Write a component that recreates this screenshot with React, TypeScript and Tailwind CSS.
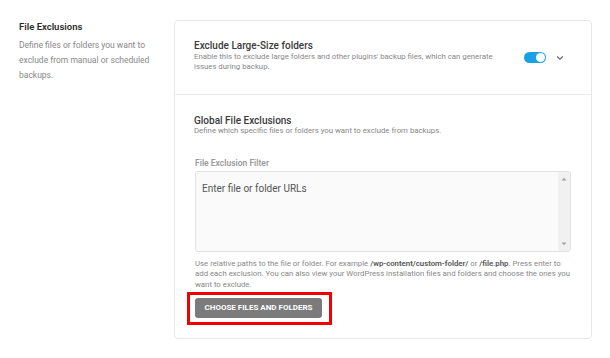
import React from 'react';

function Toggle() {
  return (
    <div className="flex h-[11px] w-[22px] items-center justify-end rounded-full bg-[#1aa1e4] pr-[1px]">
      <div className="h-[9px] w-[9px] rounded-full bg-white" />
    </div>
  );
}

function Chevron() {
  return (
    <svg width="8" height="6" viewBox="0 0 8 6" className="block">
      <path d="M1.2 1.5 L4 4.2 L6.8 1.5" fill="none" stroke="#6b6b6b" strokeWidth="1.3" />
    </svg>
  );
}

function FakeTextarea() {
  return (
    <div className="mt-[3px] flex h-[81px] w-[376px] rounded-[3px] border border-[#e2e2e2] bg-[#fafafa]">
      <div className="flex-1 pl-[6px] pt-[11px] text-[10px] leading-[12px] text-[#555]">
        Enter file or folder URLs
      </div>
      <div className="flex w-[12px] flex-col items-center justify-between bg-[#f1f1f1] py-[5px]">
        <svg width="6" height="4" viewBox="0 0 6 4">
          <path d="M0.5 3.5 L3 0.8 L5.5 3.5 Z" fill="#a3a3a3" />
        </svg>
        <svg width="6" height="4" viewBox="0 0 6 4">
          <path d="M0.5 0.5 L3 3.2 L5.5 0.5 Z" fill="#a3a3a3" />
        </svg>
      </div>
    </div>
  );
}

export default function App() {
  return (
    <div className="h-[358px] w-[610px] bg-white font-['Roboto',sans-serif]">
      <div className="flex pl-[19px] pt-[20px]">
        <div className="w-[155px]">
          <p className="text-[9.5px] font-semibold leading-[14px] text-[#2b2b2b]">File Exclusions</p>
          <p className="mt-[3.5px] w-[136px] text-[8.5px] leading-[15px] text-[#888]">
            Define files or folders you want to exclude from manual or scheduled backups.
          </p>
        </div>

        <div className="w-[418px] rounded-[4px] border border-[#e8e8e8]">
          <div className="flex h-[73px] items-start pl-[19px] pr-[27px] pt-[18.5px]">
            <div className="w-[310px]">
              <p className="text-[10px] leading-[12px] font-medium text-[#3a3a3a]">Exclude Large-Size folders</p>
              <p className="text-[7.8px] leading-[10px] text-[#888]">
                Enable this to exclude large folders and other plugins' backup files, which can generate issues during backup.
              </p>
            </div>
            <div className="ml-auto mt-[12.5px] flex items-center gap-[10px]">
              <Toggle />
              <Chevron />
            </div>
          </div>

          <div className="border-t border-[#ececec] pb-[20px] pl-[20px] pr-[20px] pt-[19.5px]">
            <p className="-ml-[1px] text-[10px] leading-[11px] font-medium text-[#3a3a3a]">Global File Exclusions</p>
            <p className="-ml-[1px] text-[7.8px] leading-[10px] text-[#888]">
              Define which specific files or folders you want to exclude from backups.
            </p>
            <p className="mt-[22px] text-[8.5px] font-semibold leading-[10px] text-[#9a9a9a]">File Exclusion Filter</p>
            <FakeTextarea />
            <p className="mt-[7px] w-[376px] text-[7.8px] leading-[10.5px] text-[#888]">
              Use relative paths to the file or folder. For example{' '}
              <b className="font-semibold text-[#555]">/wp-content/custom-folder/</b> or{' '}
              <b className="font-semibold text-[#555]">/file.php</b>. Press enter to add each exclusion. You can
              also view your WordPress installation files and folders and choose the ones you want to exclude.
            </p>
            <div className="relative mt-[8px] w-[127px]">
              <button className="flex h-[20px] w-[127px] items-center justify-center rounded-[3px] bg-[#7b7b7b] text-[8px] font-bold uppercase text-white">
                Choose files and folders
              </button>
              <div className="absolute left-[-8px] top-[-6px] h-[33px] w-[145px] border-[3px] border-[#f20000]" />
            </div>
          </div>
        </div>
      </div>
    </div>
  );
}
